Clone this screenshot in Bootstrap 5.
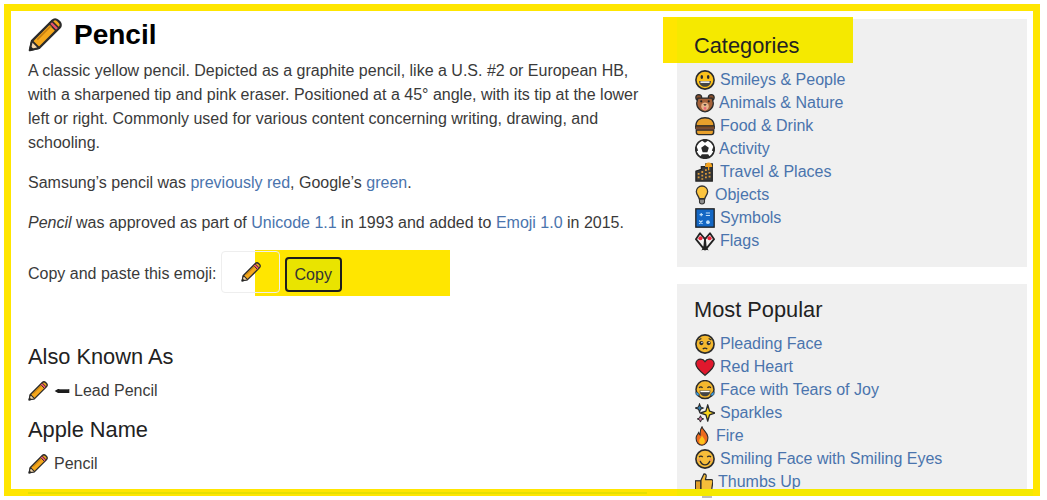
<!DOCTYPE html>
<html lang="en">
<head>
<meta charset="utf-8">
<title>Pencil</title>
<link href="https://cdn.jsdelivr.net/npm/bootstrap@5.3.0/dist/css/bootstrap.min.css" rel="stylesheet">
<style>
html,body{background:#fff;margin:0;overflow:hidden}
body{font-family:"Liberation Sans",Arial,sans-serif;font-size:16px;color:#3a3a3a}
a{color:#4a74ad;text-decoration:none}
.shot{position:relative;height:500px;overflow:hidden}
.clip-area{height:496px;overflow:hidden}
.frame{position:absolute;left:4px;top:4px;width:1036px;height:492px;border:7px solid #ffe600;z-index:5;pointer-events:none}
.band-left{position:absolute;left:17px;bottom:-5px;width:619px;height:2px;background:#e6e000}
.band-right{position:absolute;left:666px;bottom:-7px;width:356px;height:7px;background:#f5e900}
.stub{position:absolute;left:702px;top:496px;width:10px;height:2px;background:#bbb}
.main-col{width:677px;padding:18px 0 0 28px;flex:none}
.side-col{width:350px;padding-top:19px;flex:none}
.title{font-size:28px;font-weight:700;color:#000;line-height:34px;margin:0 0 7px;gap:12px;height:34px}
.title svg{width:34px;height:34px;margin-top:-1px}
.prose{line-height:24px;margin-bottom:16px;width:612px}
.copy-row{position:relative;height:42px;gap:4px}
.copy-text{padding-top:4px}
.emoji-box{width:59px;height:42px;border:1px solid #eee;border-radius:4px;position:relative;z-index:1;background:transparent}
.emoji-box svg{width:20px;height:20px;margin-left:19px}
.hl-copy{position:absolute;left:227px;top:-1px;width:195px;height:46px;background:#ffe600}
.copy-btn{position:relative;z-index:1;margin:5px 0 0 1px;padding:0 8px;height:35px;line-height:31px;font-size:16px;color:#333;background:#e9e400;border:2px solid #1d1d1d;border-radius:4px}
.sec-title{font-size:21.8px;font-weight:400;color:#222;line-height:24px;margin:0}
.sec-first{margin-top:52px}
.sec-next{margin-top:15px}
.sec-line{height:24px;gap:6px;margin:10px 0 0}
.sec-line svg{width:20px;height:20px}
.sec-line svg.leadicon{width:16px;margin-right:-2px}
.panel{background:#f0f0f0;position:relative;padding:14px 17px 0}
.panel-a{height:248px;margin-bottom:17px}
.panel-b{height:300px;padding-top:13px}
.panel-title{font-size:21.8px;font-weight:400;color:#222;line-height:26px;margin:0 0 9px;position:relative;z-index:1}
.hl-cat{position:absolute;left:-14px;top:-2px;width:190px;height:46px;background:linear-gradient(90deg,#ffe600 14px,#f5e900 14px)}
.cat-list{list-style:none;margin:0;padding:0 0 0 1px;position:relative;z-index:1}
.cat-list li{height:23px;line-height:23px;display:flex;align-items:center;gap:5px;white-space:nowrap}
.cat-list svg{width:20px;height:20px;flex:none}
.cat-list svg.tight{margin-right:-1px}
.cat-list svg.bulbicon{width:14px;margin-right:1px}
.cat-list svg.fireicon{width:14px;margin-right:2px}
.cat-list svg.thumbicon{width:18px}
</style>
</head>
<body>
<svg width="0" height="0" class="d-block" aria-hidden="true">
<defs>
<symbol id="pencil" viewBox="1 1 22 22"><path d="M2.2 21.800l1.400-6L16.800 2.600c1-1 2.500-1 3.500 0l1.100 1.100c1 1 1 2.500 0 3.500L8.200 20.400z" fill="#f5a81c" stroke="#2b2b2b" stroke-width="1.500" stroke-linejoin="round"/><path d="M16.500 3l4.500 4.500-1.800 1.800-4.500-4.500z" fill="#e9536b" stroke="#2b2b2b" stroke-width="1"/><path d="M3.600 15.800l4.600 4.600-6 1.400z" fill="#f4d5a8" stroke="#2b2b2b" stroke-width="1.200" stroke-linejoin="round"/><path d="M2.200 21.800l.6-2.600 2 2z" fill="#222"/><path d="M7 15l9-9" stroke="#c67e10" stroke-width="1"/></symbol>
<symbol id="lead" viewBox="0 0 24 24"><path d="M1 12l5-3h17v6H6z" fill="#1c1c1c"/><path d="M8 9.800h14" stroke="#888" stroke-width="1"/></symbol>
<symbol id="smiley" viewBox="1 1 22 22"><circle cx="12" cy="12" r="10" fill="#fcc21b" stroke="#2b2b2b" stroke-width="1.800"/><ellipse cx="8.500" cy="8.700" rx="1.400" ry="2.200" fill="#2b2b2b"/><ellipse cx="15.500" cy="8.700" rx="1.400" ry="2.200" fill="#2b2b2b"/><path d="M5.500 13h13c0 4-3 6.500-6.500 6.500S5.500 17 5.500 13z" fill="#444"/><path d="M7 13.500h10v1.700H7z" fill="#fff"/></symbol>
<symbol id="bear" viewBox="0 0 24 24"><circle cx="4.500" cy="5.500" r="3.500" fill="#8a4f2c" stroke="#2b2b2b" stroke-width="1.500"/><circle cx="19.500" cy="5.500" r="3.500" fill="#8a4f2c" stroke="#2b2b2b" stroke-width="1.500"/><path d="M3.500 6h17l1.500 6c0 7-6 10.500-10 10.500S2 19 2 12z" fill="#a5623a" stroke="#2b2b2b" stroke-width="1.500"/><path d="M7.500 16c0-3 2-4.500 4.500-4.500s4.500 1.500 4.500 4.500c0 3-2 5-4.500 5s-4.500-2-4.500-5z" fill="#e7b58c"/><circle cx="7.500" cy="10" r="1.300" fill="#222"/><circle cx="16.500" cy="10" r="1.300" fill="#222"/><path d="M10 13.500h4l-2 2z" fill="#222"/><path d="M10.500 17h3v3h-3z" fill="#e9657a"/></symbol>
<symbol id="burger" viewBox="1 2 22 20"><path d="M2 12c0-6 4.500-9 10-9s10 3 10 9z" fill="#e8a02c" stroke="#2b2b2b" stroke-width="1.600"/><path d="M1.500 12h21v3h-21z" fill="#7b4a22" stroke="#2b2b2b" stroke-width="1"/><path d="M2 15h20v1.500H2z" fill="#e46f3c"/><path d="M2.500 16.500h19v2.500c0 1.500-1 2.500-2.500 2.500H5c-1.500 0-2.500-1-2.500-2.500z" fill="#e8a02c" stroke="#2b2b2b" stroke-width="1.600"/></symbol>
<symbol id="ball" viewBox="1 1 22 22"><circle cx="12" cy="12" r="10.200" fill="#fff" stroke="#2b2b2b" stroke-width="1.800"/><path d="M12 7.500l4.200 3-1.600 5H9.400l-1.600-5zM8 2.500l4 2.500 4-2.500-4-1zM2.500 8.500l2 5.500-2.700 .5zM21.500 8.500l-2 5.500 2.700 .5zM6.500 21l2-3.200h7l2 3.200-5.500 1.500z" fill="#2b2b2b"/></symbol>
<symbol id="city" viewBox="1 1 22 22"><path d="M2 22V11l6-2V6h5V3h7v19z" fill="#3a3a3a" stroke="#222" stroke-width="1.400"/><path d="M12 6.500C12 3 14 1.500 16 1.500s4 1.500 4 5z" fill="#f3a21d"/><path d="M15.300 6h1.400v4h-1.400z" fill="#f3a21d"/><path d="M4 13h2v2H4zM4 17h2v2H4zM8 11h2v2H8zM8 15h2v2H8zM8 19h2v1.500H8zM12 9h2v2h-2zM12 13h2v2h-2zM12 17h2v2h-2zM16 12h2v2h-2zM16 16h2v2h-2z" fill="#d99a3a"/></symbol>
<symbol id="bulb" viewBox="0 0 16 24"><path d="M8 1.200c-3.800 0-6.800 2.900-6.800 6.700 0 3.500 2.800 5.300 3.500 8.600h6.600c.7-3.300 3.500-5.100 3.500-8.600 0-3.800-3-6.700-6.800-6.700z" fill="#fcc43e" stroke="#333" stroke-width="1.600"/><path d="M5 17h6v3.500c0 1.300-1.300 2.300-3 2.300s-3-1-3-2.300z" fill="#8f8f8f" stroke="#333" stroke-width="1.300"/></symbol>
<symbol id="sym" viewBox="0 0 24 24"><rect x="1" y="1" width="22" height="22" fill="#1367c4" stroke="#222" stroke-width="1.600"/><path d="M7.500 6v4M5.500 8h4M13 6h5M13 9h5M5 15l4 4M9 15l-4 4" stroke="#bfe0fb" stroke-width="1.400"/><circle cx="15.500" cy="17" r="2.200" fill="#bfe0fb"/></symbol>
<symbol id="flags" viewBox="1 1 22 22"><path d="M11 21L2 10l4.500-6.500L12 10zM13 21l9-11-4.500-6.500L12 10z" fill="#f4f4f4" stroke="#222" stroke-width="2" stroke-linejoin="round"/><circle cx="7" cy="9" r="2.300" fill="#e8283c"/><circle cx="17" cy="9" r="2.300" fill="#e8283c"/><path d="M8 22.500l4-7 4 7-2-1-2 1-2-1z" fill="#222"/></symbol>
<symbol id="plead" viewBox="1 1 22 22"><circle cx="12" cy="12" r="10" fill="#f4b82e" stroke="#2b2b2b" stroke-width="1.800"/><circle cx="8" cy="11" r="2.300" fill="#2b2b2b"/><circle cx="16" cy="11" r="2.300" fill="#2b2b2b"/><circle cx="8.600" cy="10.400" r=".8" fill="#fff"/><circle cx="16.600" cy="10.400" r=".8" fill="#fff"/><path d="M5 7.500l3-1.500M19 7.500L16 6M9.500 17.500c1.500-1.300 3.500-1.300 5 0" fill="none" stroke="#2b2b2b" stroke-width="1.300"/></symbol>
<symbol id="heart" viewBox="0 0 24 24"><path d="M12 22C7 18 1 13.500 1 8.200 1 4.800 3.700 2.500 6.800 2.500c2.200 0 4 1 5.200 3 1.200-2 3-3 5.200-3 3.100 0 5.800 2.300 5.800 5.700C23 13.500 17 18 12 22z" fill="#e0182d" stroke="#2b2b2b" stroke-width="1.500"/></symbol>
<symbol id="joy" viewBox="0 0 24 24"><circle cx="12" cy="11.500" r="10.800" fill="#f4b82e" stroke="#2b2b2b" stroke-width="1.800"/><path d="M5 9.500c1-1.800 3-1.800 4 0M15 9.500c1-1.800 3-1.800 4 0" fill="none" stroke="#2b2b2b" stroke-width="1.400"/><path d="M5.500 12.500h13c0 4.500-3 7-6.500 7s-6.500-2.500-6.500-7z" fill="#444"/><path d="M6.500 13h11v1.600h-11z" fill="#fff"/><path d="M1 14c1.500 0 4 1.500 4.500 4.500C3 20 .5 18 1 14zM23 14c-1.500 0-4 1.500-4.500 4.500 2.500 1.500 5-.5 4.500-4.500z" fill="#3b9be0" stroke="#2b2b2b" stroke-width=".8"/></symbol>
<symbol id="spark" viewBox="1 1 22 22"><path d="M15 3l2 7 6 2-6 2-2 7-2-7-6-2 6-2z" fill="#fbd51d" stroke="#2b2b2b" stroke-width="1.500" stroke-linejoin="round"/><path d="M6 2l1.200 3.300L10 6.500 7.200 7.800 6 11 4.800 7.800 1.500 6.500l3.300-1.200z" fill="#2f7fb8" stroke="#2b2b2b" stroke-width="1.200"/><path d="M7 15l1 2.500 2.500 1-2.500 1L7 22l-1-2.500-2.500-1 2.500-1z" fill="#d76fa8" stroke="#2b2b2b" stroke-width="1.100"/></symbol>
<symbol id="fire" viewBox="0 0 16 24"><path d="M8 1c1 4 6 6 7 12 .6 5.500-3 10-7 10s-7.500-3.500-7-9c.3-3 2-4.500 3-6 .3 1.500 1 2.500 1.800 2.800C5.500 7 6 3.500 8 1z" fill="#ee6a1f" stroke="#2b2b2b" stroke-width="1.300"/><path d="M8 11c.6 2.500 3.500 4 3.500 7 0 2.500-1.600 4-3.500 4s-3.500-1.500-3.500-4c0-3 3-4 3.500-7z" fill="#fcc21b"/></symbol>
<symbol id="smile" viewBox="1 1 22 22"><circle cx="12" cy="12" r="10" fill="#f6bd3a" stroke="#2b2b2b" stroke-width="1.800"/><path d="M5.500 10c1-1.600 3-1.600 4 0M14.500 10c1-1.600 3-1.600 4 0" fill="none" stroke="#2b2b2b" stroke-width="1.400"/><path d="M6.500 14c1.200 3 3.200 4.500 5.500 4.500s4.300-1.500 5.500-4.500" fill="none" stroke="#2b2b2b" stroke-width="1.500"/><circle cx="5.500" cy="13" r="1.600" fill="#f09a5a"/><circle cx="18.500" cy="13" r="1.600" fill="#f09a5a"/></symbol>
<symbol id="thumb" viewBox="1 1 22 22"><path d="M8 10.500L12 2c2.500 0 3 2 2.500 4l-.8 3H21c1.500 0 2 1.400 1.800 2.800l-1.300 8.700c-.2 1-1 1.500-2 1.500H8z" fill="#f6bd3a" stroke="#2b2b2b" stroke-width="1.500" stroke-linejoin="round"/><rect x="1.500" y="10.500" width="6.500" height="11.500" fill="#e2a02a" stroke="#2b2b2b" stroke-width="1.500"/></symbol>
</defs>
</svg>

<div class="shot">
  <div class="clip-area d-flex">
    <div class="main-col">
      <h1 class="title d-flex align-items-center"><svg><use href="#pencil"/></svg>Pencil</h1>
      <p class="prose">A classic yellow pencil. Depicted as a graphite pencil, like a U.S. #2 or European HB, with a sharpened tip and pink eraser. Positioned at a 45° angle, with its tip at the lower left or right. Commonly used for various content concerning writing, drawing, and schooling.</p>
      <p class="prose">Samsung’s pencil was <a href="#">previously red</a>, Google’s <a href="#">green</a>.</p>
      <p class="prose"><em>Pencil</em> was approved as part of <a href="#">Unicode 1.1</a> in 1993 and added to <a href="#">Emoji 1.0</a> in 2015.</p>
      <div class="copy-row d-flex align-items-center">
        <div class="hl-copy"></div>
        <span class="copy-text">Copy and paste this emoji:</span>
        <div class="emoji-box d-flex align-items-center"><svg><use href="#pencil"/></svg></div>
        <button class="copy-btn" type="button">Copy</button>
      </div>
      <h2 class="sec-title sec-first">Also Known As</h2>
      <div class="sec-line d-flex align-items-center"><svg><use href="#pencil"/></svg><svg class="leadicon"><use href="#lead"/></svg><span>Lead Pencil</span></div>
      <h2 class="sec-title sec-next">Apple Name</h2>
      <div class="sec-line d-flex align-items-center"><svg><use href="#pencil"/></svg><span>Pencil</span></div>
    </div>
    <div class="side-col">
      <div class="panel panel-a">
        <div class="hl-cat"></div>
        <h2 class="panel-title">Categories</h2>
        <ul class="cat-list">
          <li><svg><use href="#smiley"/></svg><a href="#">Smileys &amp; People</a></li>
          <li><svg class="tight"><use href="#bear"/></svg><a href="#">Animals &amp; Nature</a></li>
          <li><svg><use href="#burger"/></svg><a href="#">Food &amp; Drink</a></li>
          <li><svg class="tight"><use href="#ball"/></svg><a href="#">Activity</a></li>
          <li><svg><use href="#city"/></svg><a href="#">Travel &amp; Places</a></li>
          <li><svg class="bulbicon"><use href="#bulb"/></svg><a href="#">Objects</a></li>
          <li><svg><use href="#sym"/></svg><a href="#">Symbols</a></li>
          <li><svg><use href="#flags"/></svg><a href="#">Flags</a></li>
        </ul>
      </div>
      <div class="panel panel-b">
        <h2 class="panel-title">Most Popular</h2>
        <ul class="cat-list">
          <li><svg><use href="#plead"/></svg><a href="#">Pleading Face</a></li>
          <li><svg><use href="#heart"/></svg><a href="#">Red Heart</a></li>
          <li><svg><use href="#joy"/></svg><a href="#">Face with Tears of Joy</a></li>
          <li><svg><use href="#spark"/></svg><a href="#">Sparkles</a></li>
          <li><svg class="fireicon"><use href="#fire"/></svg><a href="#">Fire</a></li>
          <li><svg><use href="#smile"/></svg><a href="#">Smiling Face with Smiling Eyes</a></li>
          <li><svg class="thumbicon"><use href="#thumb"/></svg><a href="#">Thumbs Up</a></li>
        </ul>
      </div>
    </div>
  </div>
  <div class="frame"><div class="band-left"></div><div class="band-right"></div></div>
  <div class="stub"></div>
</div>
<script src="https://cdn.jsdelivr.net/npm/bootstrap@5.3.0/dist/js/bootstrap.bundle.min.js"></script>
</body>
</html>
